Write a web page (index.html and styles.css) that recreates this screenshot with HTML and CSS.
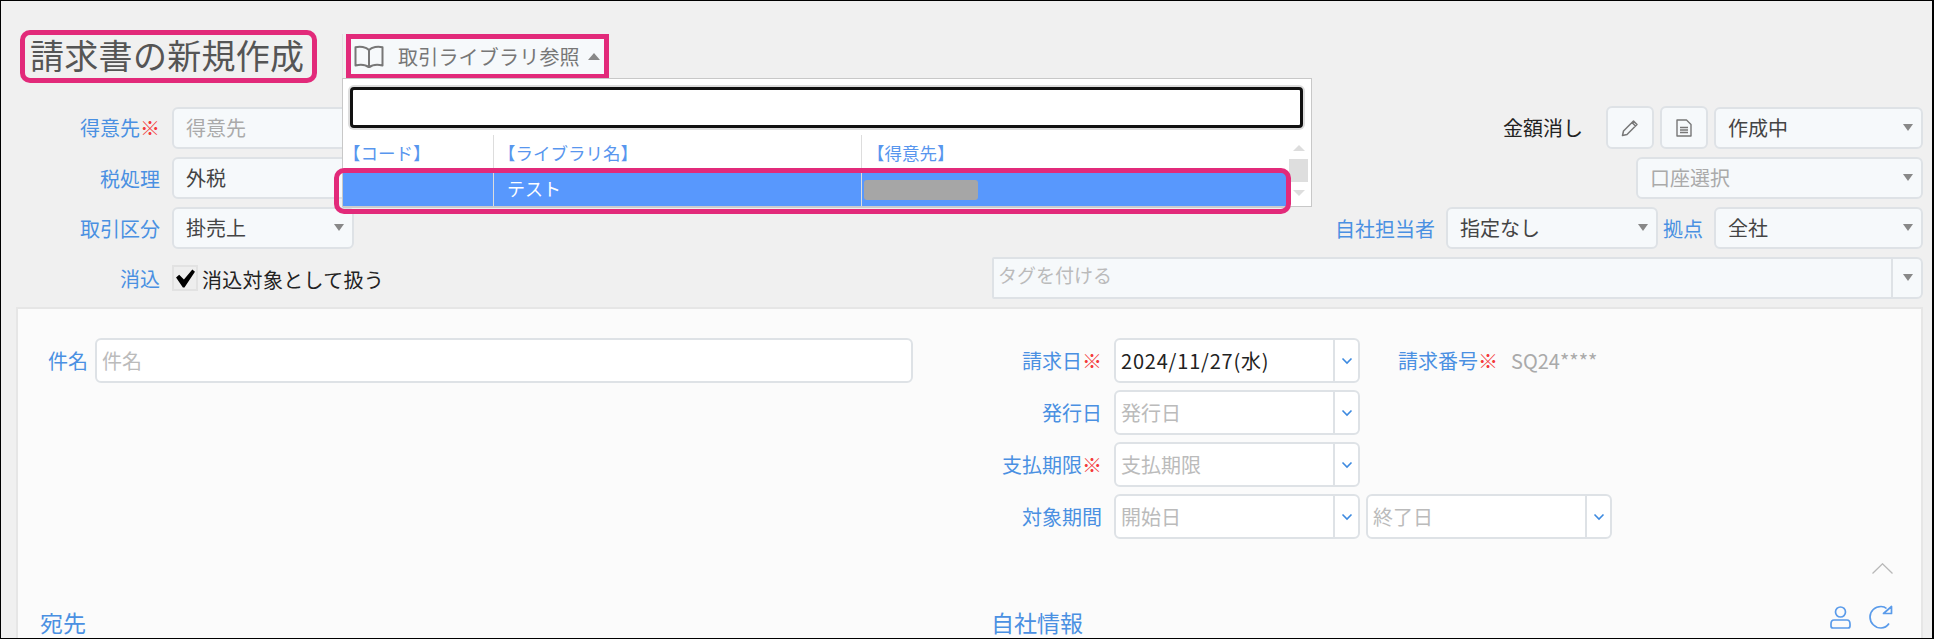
FILE: index.html
```html
<!DOCTYPE html>
<html lang="ja">
<head>
<meta charset="utf-8">
<title>請求書の新規作成</title>
<link rel="stylesheet" href="styles.css">
</head>
<body>
<div class="page">
  <header class="head">
    <h1 class="title">請求書の新規作成</h1>
    <div class="lib">
      <button class="lib-btn" type="button">
        <svg class="book" viewBox="0 0 30 23" width="30" height="23" fill="none" stroke="#777" stroke-width="2" stroke-linejoin="round"><path d="M15 5C12 1.800 6 1 1.500 2.200V20.500C6 19.500 12 20 15 22.500C18 20 24 19.500 28.500 20.500V2.200C24 1 18 1.800 15 5ZM15 5V22.500"/></svg>
        <span class="lib-text">取引ライブラリ参照</span>
        <span class="tri-up"></span>
      </button>
      <div class="drop">
        <div class="search"></div>
        <div class="list">
          <div class="cols">
            <div class="list-row list-head"><div class="c1">【コード】</div><div class="c2">【ライブラリ名】</div><div class="c3">【得意先】</div></div>
            <div class="list-row list-sel"><div class="c1"></div><div class="c2">テスト</div><div class="c3"><span class="mask"></span></div></div>
          </div>
          <div class="scroll"><span class="sc-up"></span><span class="sc-thumb"></span><span class="sc-down"></span></div>
        </div>
        <div class="row-mark"></div>
      </div>
    </div>
  </header>

  <section class="form">
    <div class="row">
      <div class="group"><label class="lbl">得意先<em>※</em></label><div class="field w182 ph">得意先</div></div>
      <div class="group">
        <span class="mute-label">金額消し</span>
        <button class="icon-btn" type="button"><svg viewBox="0 0 18 18" width="18" height="18" fill="none" stroke="#777" stroke-width="1.500" stroke-linejoin="round"><path d="M1.500 16.500L2.500 12L12.500 2L16 5.500L6 15.500ZM11 3.500L14.500 7"/></svg></button>
        <button class="icon-btn" type="button"><svg viewBox="0 0 16 18" width="16" height="18" fill="none" stroke="#777" stroke-width="1.400" stroke-linejoin="round"><path d="M1 1H10.500L15 5.500V17H1ZM4 8.500H12M4 11H12M4 13.500H12"/></svg></button>
        <div class="field sel w209">作成中</div>
      </div>
    </div>
    <div class="row">
      <div class="group"><label class="lbl">税処理</label><div class="field w182">外税</div></div>
      <div class="group"><div class="field sel ph w287">口座選択</div></div>
    </div>
    <div class="row">
      <div class="group"><label class="lbl">取引区分</label><div class="field sel w182">掛売上</div></div>
      <div class="group">
        <label class="lbl-auto">自社担当者</label>
        <div class="field sel w212">指定なし</div>
        <label class="lbl-site">拠点</label>
        <div class="field sel w209">全社</div>
      </div>
    </div>
    <div class="row">
      <div class="group">
        <label class="lbl">消込</label>
        <span class="check"><svg viewBox="0 0 20 18" width="21" height="19"><path d="M1 8L4 5.500L8.500 10L16.500 0.500L19 2.500L9 17.500H7.500Z" fill="#000"/></svg></span>
        <span class="check-text">消込対象として扱う</span>
      </div>
      <div class="group">
        <div class="tag"><span class="tag-text">タグを付ける</span><span class="tag-arrow"></span></div>
      </div>
    </div>
  </section>

  <section class="panel">
    <div class="panel-main">
      <div class="subject"><label class="lbl-sub">件名</label><div class="input w818">件名</div></div>
      <div class="dates">
        <div class="date-row">
          <label class="lbl-date">請求日<em>※</em></label>
          <div class="date"><span class="date-val">2024/11/27(水)</span><span class="chev"><svg viewBox="0 0 12 8" width="12" height="8" fill="none" stroke="#3d8ae0" stroke-width="1.600"><path d="M1.500 1.500L6 6L10.500 1.500"/></svg></span></div>
          <span class="no-label">請求番号<em>※</em></span>
          <span class="no-val">SQ24****</span>
        </div>
        <div class="date-row">
          <label class="lbl-date">発行日</label>
          <div class="date"><span class="date-ph">発行日</span><span class="chev"><svg viewBox="0 0 12 8" width="12" height="8" fill="none" stroke="#3d8ae0" stroke-width="1.600"><path d="M1.500 1.500L6 6L10.500 1.500"/></svg></span></div>
        </div>
        <div class="date-row">
          <label class="lbl-date">支払期限<em>※</em></label>
          <div class="date"><span class="date-ph">支払期限</span><span class="chev"><svg viewBox="0 0 12 8" width="12" height="8" fill="none" stroke="#3d8ae0" stroke-width="1.600"><path d="M1.500 1.500L6 6L10.500 1.500"/></svg></span></div>
        </div>
        <div class="date-row">
          <label class="lbl-date">対象期間</label>
          <div class="date"><span class="date-ph">開始日</span><span class="chev"><svg viewBox="0 0 12 8" width="12" height="8" fill="none" stroke="#3d8ae0" stroke-width="1.600"><path d="M1.500 1.500L6 6L10.500 1.500"/></svg></span></div>
          <div class="date date-end"><span class="date-ph">終了日</span><span class="chev"><svg viewBox="0 0 12 8" width="12" height="8" fill="none" stroke="#3d8ae0" stroke-width="1.600"><path d="M1.500 1.500L6 6L10.500 1.500"/></svg></span></div>
        </div>
      </div>
    </div>
    <div class="collapse"><svg viewBox="0 0 21 11" width="21" height="11" fill="none" stroke="#b8b8b8" stroke-width="1.300"><path d="M0.500 10.500L10.500 0.800L20.500 10.500"/></svg></div>
    <div class="sections">
      <h2 class="sec sec-to">宛先</h2>
      <h2 class="sec sec-own">自社情報</h2>
      <div class="sec-icons">
        <svg viewBox="0 0 21 23" width="21" height="23" fill="none" stroke="#5a9bea" stroke-width="1.700"><circle cx="10.500" cy="6" r="5"/><path d="M4 14H17C19 14 20 15.500 20 18V20C20 21.200 19.200 22 18 22H3C1.800 22 1 21.200 1 20V18C1 15.500 2 14 4 14Z"/></svg>
        <svg viewBox="0 0 24 24" width="24" height="24" fill="none" stroke="#5a9bea" stroke-width="1.700" stroke-linejoin="round"><path d="M20 18.500C18 21.500 15.500 23 12 23C6 23 1 18 1 12C1 6 6 1.500 12 1.500C14 1.500 16 2 17.500 3.500"/><path d="M14.500 8.500L22.500 1.500V8.500Z"/></svg>
      </div>
    </div>
  </section>
</div>
</body>
</html>
```
FILE: styles.css
```css
* { box-sizing: border-box; }
html, body { margin: 0; padding: 0; }
body { font-family: "Noto Sans CJK JP", "Noto Sans", sans-serif; }
em { font-style: normal; color: #f43a3a; }

.page {
  width: 1934px;
  height: 639px;
  overflow: hidden;
  background: #f0f0f0;
  border-top: 1px solid #000;
  border-left: 1px solid #000;
  border-right: 2px solid #000;
  border-bottom: 1px solid #000;
  padding: 29px 9px 0 15px;
}

.head { display: flex; align-items: flex-start; margin-bottom: 23px; }
.title {
  margin: 0 0 0 4px;
  width: 297px;
  height: 53px;
  border: 5px solid #e22a7a;
  border-radius: 10px;
  padding-left: 5px;
  font-size: 34px;
  letter-spacing: 0.3px;
  line-height: 40px;
  font-weight: 400;
  color: #555;
  white-space: nowrap;
}

.lib { position: relative; z-index: 5; margin: 4px 0 0 25px; height: 45px; border-left: 1px solid #e2e2e2; }
.lib-btn {
  display: flex;
  align-items: center;
  margin-left: 3px;
  width: 263px;
  height: 45px;
  padding: 0 0 0 3px;
  border: 5px solid #e22a7a;
  background: #f6f9fb;
  font-family: inherit;
}
.book { flex: none; }
.lib-text { margin-left: 14px; font-size: 20px; letter-spacing: 0.2px; color: #777; white-space: nowrap; }
.tri-up { margin-left: 8px; border-left: 6px solid transparent; border-right: 6px solid transparent; border-bottom: 7px solid #888; }

.drop {
  position: absolute;
  left: -1px;
  top: 44px;
  width: 970px;
  height: 129px;
  background: #fff;
  border: 1px solid #c8c8c8;
  padding: 8px 8px 0 0;
}
.search {
  margin-left: 7px;
  width: 953px;
  height: 41px;
  border: 3px solid #111;
  border-radius: 4px;
  background: #fff;
  box-shadow: 0 0 0 2px #ddd;
}
.list { display: flex; margin-top: 7px; margin-right: -8px; }
.cols { width: 946px; }
.list-row { display: flex; }
.list-head { height: 38px; color: #5896ee; font-size: 17.500px; line-height: 35px; }
.list-sel { height: 35px; background: #5898fd; color: #fff; font-size: 18px; line-height: 30px; border-bottom: 2px solid #ccc; }
.c1 { width: 150px; padding-left: 0; white-space: nowrap; }
.c2 { width: 368px; border-left: 1px solid #ddd; padding-left: 13px; white-space: nowrap; }
.c3 { width: 428px; border-left: 1px solid #ddd; padding: 0 0 0 2px; white-space: nowrap; }
.list-head .c2 { padding-left: 4px; }
.list-head .c3 { padding-left: 5px; }
.mask { display: block; margin-top: 7px; width: 114px; height: 20px; background: #a6a6a6; border-radius: 3px; }

.scroll { display: flex; flex-direction: column; align-items: center; width: 19px; padding-top: 10px; }
.sc-up { border-left: 6px solid transparent; border-right: 6px solid transparent; border-bottom: 6px solid #ddd; }
.sc-thumb { width: 19px; height: 23px; margin-top: 8px; background: #dedede; }
.sc-down { margin-top: 8px; border-left: 6px solid transparent; border-right: 6px solid transparent; border-top: 6px solid #ddd; }

.row-mark {
  position: absolute;
  left: -9px;
  top: 89px;
  width: 957px;
  height: 46px;
  border: 5px solid #e22a7a;
  border-radius: 10px;
}

.form { display: flex; flex-direction: column; gap: 8px; }
.row { display: flex; justify-content: space-between; align-items: center; min-height: 42px; }
.row:first-child { min-height: 43px; }
.group { display: flex; align-items: center; }

.lbl { width: 144px; margin-right: 12px; text-align: right; font-size: 20px; color: #4a90e2; white-space: nowrap; }
.lbl-auto { margin-right: 11px; font-size: 20px; color: #4a90e2; white-space: nowrap; }
.lbl-site { margin: 0 11px 0 5px; font-size: 20px; color: #4a90e2; white-space: nowrap; }
.mute-label { margin-right: 23px; font-size: 20px; color: #222; white-space: nowrap; }

.field {
  position: relative;
  height: 42px;
  padding-left: 12px;
  border: 2px solid #dee2e6;
  border-radius: 6px;
  background: #f6f9fb;
  font-size: 20px;
  line-height: 38px;
  color: #444;
  white-space: nowrap;
}
.ph { color: #aaa; }
.sel::after {
  content: "";
  position: absolute;
  right: 8px;
  top: 15px;
  border-left: 5px solid transparent;
  border-right: 5px solid transparent;
  border-top: 7px solid #888;
}
.w182 { width: 182px; }
.w209 { width: 209px; }
.w212 { width: 212px; }
.w287 { width: 287px; }

.icon-btn {
  display: flex;
  align-items: center;
  justify-content: center;
  width: 48px;
  height: 43px;
  margin-right: 6px;
  padding: 0;
  border: 2px solid #dee2e6;
  border-radius: 6px;
  background: #f6f9fb;
}

.check {
  display: flex;
  align-items: center;
  justify-content: center;
  width: 26px;
  height: 26px;
  border: 2px solid #e2e2e2;
  background: #eee;
}
.check-text { margin: 3px 0 0 4px; font-size: 20px; letter-spacing: 0.3px; color: #222; white-space: nowrap; }

.tag {
  display: flex;
  align-items: center;
  justify-content: space-between;
  width: 931px;
  height: 42px;
  border: 2px solid #dee2e6;
  background: #f6f9fb;
  border-radius: 2px 6px 6px 2px;
}
.tag-text { padding: 0 0 7px 4px; font-size: 19px; color: #bbb; }
.tag-arrow { position: relative; width: 30px; height: 38px; border-left: 2px solid #dee2e6; }
.tag-arrow::after {
  content: "";
  position: absolute;
  right: 8px;
  top: 15px;
  border-left: 5px solid transparent;
  border-right: 5px solid transparent;
  border-top: 7px solid #888;
}

.panel {
  height: 340px;
  margin-top: 8px;
  background: #fbfbfb;
  border: 2px solid #e6e6e6;
  border-bottom: 0;
  padding: 29px 28px 0 0;
}
.panel-main { display: flex; align-items: flex-start; }
.subject { display: flex; align-items: center; width: 1015px; }
.lbl-sub { width: 70px; margin-right: 7px; text-align: right; font-size: 20px; color: #4a90e2; }
.input {
  height: 45px;
  padding-left: 5px;
  border: 2px solid #dee2e6;
  border-radius: 6px;
  background: #fff;
  font-size: 20px;
  line-height: 41px;
  color: #bbb;
}
.w818 { width: 818px; }

.dates { display: flex; flex-direction: column; gap: 7px; }
.date-row { display: flex; align-items: center; height: 45px; }
.lbl-date { display: flex; justify-content: flex-end; width: 69px; margin-right: 12px; font-size: 20px; color: #4a90e2; white-space: nowrap; }
.date {
  display: flex;
  justify-content: space-between;
  width: 246px;
  height: 45px;
  border: 2px solid #dee2e6;
  border-radius: 6px;
  background: #fff;
  font-size: 20px;
  line-height: 41px;
}
.date-val { padding-left: 5px; color: #222; letter-spacing: 0.8px; white-space: nowrap; }
.date-ph { padding-left: 5px; color: #bbb; white-space: nowrap; }
.chev { display: flex; align-items: center; justify-content: center; width: 25px; border-left: 2px solid #dee2e6; }
.date-end { margin-left: 6px; }
.no-label { margin-left: 38px; font-size: 20px; color: #4a90e2; white-space: nowrap; }
.no-val { margin-left: 13px; font-size: 20px; color: #aaa; white-space: nowrap; }

.collapse { display: flex; justify-content: flex-end; margin-top: 24px; padding-right: 0; }

.sections { display: flex; align-items: flex-start; margin-top: 31px; }
.sec { margin: 0; font-size: 23px; line-height: 34px; font-weight: 400; color: #4a90e2; white-space: nowrap; }
.sec-to { margin-left: 22px; width: 952px; }
.sec-own { width: 840px; }
.sec-icons { display: flex; align-items: center; gap: 18px; margin-top: 0; }
```
